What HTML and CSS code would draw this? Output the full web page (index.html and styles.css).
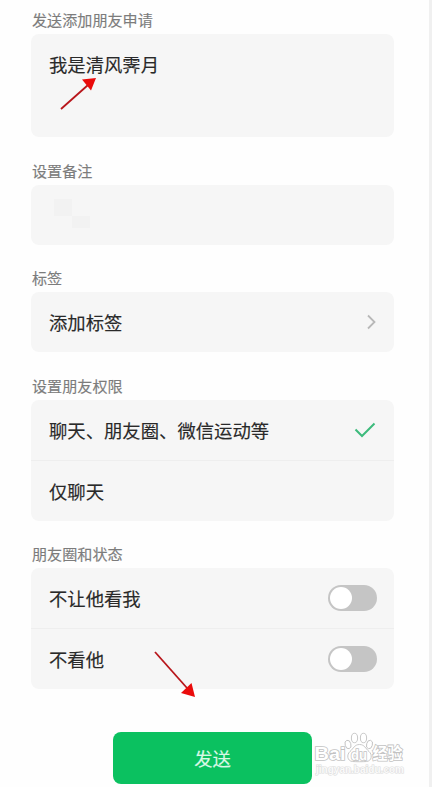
FILE: index.html
```
<!DOCTYPE html>
<html lang="zh-CN">
<head>
  <meta charset="UTF-8" />
  <title>申请添加朋友</title>
  <link rel="stylesheet" href="styles.css">
</head>
<body>
  <main class="page">
    <h2 class="label">发送添加朋友申请</h2>
    <div class="card message">我是清风霁月</div>

    <h2 class="label">设置备注</h2>
    <div class="card remark">
      <span class="mosaic"></span>
      <span class="mosaic low"></span>
    </div>

    <h2 class="label">标签</h2>
    <div class="card">
      <div class="row">
        <span>添加标签</span>
        <svg class="chevron" width="10" height="16" viewBox="0 0 10 16"><path d="M1 1.500 7.500 8 1 14.500" /></svg>
      </div>
    </div>

    <h2 class="label">设置朋友权限</h2>
    <div class="card">
      <div class="row">
        <span>聊天、朋友圈、微信运动等</span>
        <svg class="check" width="22" height="16" viewBox="0 0 22 16"><path d="M1.500 7.500 8 14 20.500 1.500" /></svg>
      </div>
      <div class="row">
        <span>仅聊天</span>
      </div>
    </div>

    <h2 class="label">朋友圈和状态</h2>
    <div class="card">
      <div class="row">
        <span>不让他看我</span>
        <span class="switch"></span>
      </div>
      <div class="row">
        <span>不看他</span>
        <span class="switch"></span>
      </div>
    </div>

    <button class="send">发送</button>
  </main>

  <!-- arrows and watermark on top of the form -->
  <svg class="overlay" width="432" height="787" viewBox="0 0 432 787">
    <g class="arrow">
      <path class="shaft" d="M61 109 88 85" />
      <path class="head" d="M96 78 82 79.500 91 90.500z" />
      <path class="shaft" d="M155 652 187 688" />
      <path class="head" d="M195 697 181 693 191.500 683z" />
    </g>
    <g class="watermark">
      <text class="brand" x="314.500" y="760" textLength="31" lengthAdjust="spacingAndGlyphs">Bai</text>
      <path d="M359.500 744.500c-5 0-6 4-9.500 7-3.500 3-3 9.500 2.500 10 4 .3 10 .3 14 0 5.500-.5 6-7 2.500-10-3.500-3-4.500-7-9.500-7z" />
      <ellipse cx="348" cy="744.500" rx="2.900" ry="4.300" transform="rotate(-15 348 744.500)" />
      <ellipse cx="354.500" cy="738" rx="3.100" ry="4.700" />
      <ellipse cx="363.500" cy="738" rx="3.100" ry="4.700" />
      <ellipse cx="369.500" cy="744.500" rx="2.900" ry="4.300" transform="rotate(15 369.500 744.500)" />
      <text class="du" x="351" y="759.500" textLength="16" lengthAdjust="spacingAndGlyphs">du</text>
      <text class="cn" x="372.500" y="759" textLength="30" lengthAdjust="spacingAndGlyphs">经验</text>
      <text class="url" x="316" y="773" textLength="88" lengthAdjust="spacingAndGlyphs">jingyan.baidu.com</text>
    </g>
  </svg>
</body>
</html>
```

FILE: styles.css
```
* {
  box-sizing: border-box;
}

body {
  margin: 0;
  height: 787px;
  overflow: hidden;
  background: #fefefe;
  border-right: 3px solid #f0f0f0;
  color: #292929;
  font-family: "Noto Sans CJK SC", sans-serif;
  font-size: 18.35px;
  -webkit-text-stroke: 0.15px;
}

.page {
  display: flex;
  flex-direction: column;
  padding: 6px 35px 0 31px;
}

.label {
  margin: 0;
  padding-left: 1px;
  height: 28px;
  line-height: 26px;
  font-size: 15.1px;
  font-weight: 400;
  color: #7c7c7c;
}

.card {
  margin-bottom: 19.5px;
  border-radius: 8px;
  background: #f6f6f6;
}

.message {
  height: 103px;
  padding: 17px 18px;
  line-height: 27px;
}

.remark {
  display: flex;
  height: 60px;
  padding: 14px 23px;
}

.mosaic {
  width: 18px;
  height: 17px;
  background: #f2f2f2;
}

.mosaic.low {
  height: 12px;
  margin-top: 17px;
}

.row {
  display: flex;
  align-items: center;
  justify-content: space-between;
  height: 60px;
  padding: 0 17px 0 18px;
}

.row + .row {
  height: 61px;
  border-top: 1px solid #eee;
}

.chevron,
.check {
  fill: none;
  stroke: #b8b8b8;
  stroke-width: 1.8;
}

.check {
  margin-right: 1px;
  stroke: #3dbb7c;
  stroke-width: 2;
}

.switch {
  width: 49px;
  height: 26px;
  padding: 2px;
  border-radius: 13px;
  background: #c5c5c5;
}

.switch::before {
  content: "";
  display: block;
  width: 22px;
  height: 22px;
  border-radius: 50%;
  background: #fff;
}

.send {
  width: 199px;
  height: 52px;
  margin: 23.5px 0 0 82px;
  padding: 0;
  border: none;
  border-radius: 8px;
  background: #0bc160;
  color: #d9f8e5;
  font: inherit;
}

.overlay {
  position: absolute;
  top: 0;
  left: 0;
  pointer-events: none;
}

.shaft {
  stroke: #b8161b;
  stroke-width: 1.8;
}

.head {
  fill: #ea0b0b;
}

.watermark {
  fill: #fff;
  stroke: #c2c2c2;
  stroke-width: 0.9;
  -webkit-text-stroke: initial;
}

.watermark text {
  font-family: "Liberation Sans", "Noto Sans CJK SC", sans-serif;
  font-weight: 700;
  stroke: #c2c2c2;
  stroke-width: 1.6px;
  paint-order: stroke;
}

.brand {
  font-size: 19px;
}

.watermark .du {
  font-size: 14px;
}

.watermark .cn {
  font-size: 16px;
}

.watermark .url {
  font-size: 10.5px;
  fill: #fafafa;
  stroke: #dcdcdc;
  stroke-width: 1.2px;
}
```
